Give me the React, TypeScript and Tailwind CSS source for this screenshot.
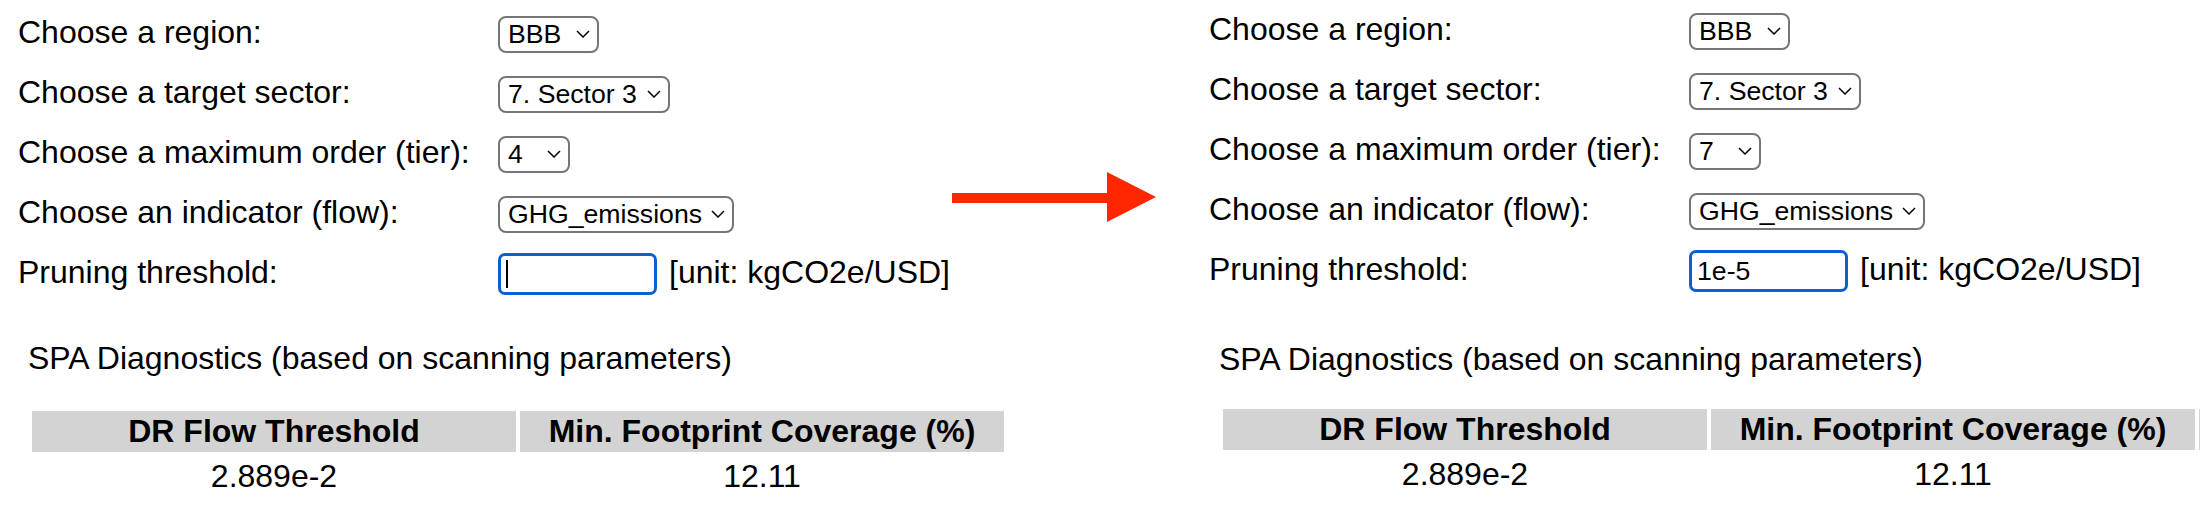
import React from 'react';

interface DropdownProps {
  value: string;
  width: string;
}

// looks like the browser's closed <select>
const Dropdown: React.FC<DropdownProps> = ({ value, width }) => (
  <div
    role="combobox"
    aria-expanded="false"
    className={`flex h-[37px] items-center justify-between rounded-[8px] border-2 border-[#767676] bg-white pl-[8px] pr-[7px] text-[26.67px] ${width}`}
  >
    <span className="whitespace-nowrap">{value}</span>
    <svg className="h-[8px] w-[14px] shrink-0" viewBox="0 0 14 8" fill="none" stroke="#000" strokeWidth="1.5">
      <path d="M1 1 L7 7 L13 1" />
    </svg>
  </div>
);

interface ThresholdProps {
  value: string;
}

const ThresholdInput: React.FC<ThresholdProps> = ({ value }) => (
  <div className="relative h-[42px] w-[159px]">
    <input
      type="text"
      defaultValue={value}
      className="h-full w-full rounded-[7px] border-[3px] border-[#0a60d2] bg-white px-[5px] text-[26.67px] text-black outline-none"
    />
    {/* text caret of the focused, still empty field */}
    {value === '' && <span className="absolute left-[8px] top-[7px] h-[28px] w-[2px] bg-black" />}
  </div>
);

const Row: React.FC<{ label: string; children: React.ReactNode }> = ({ label, children }) => (
  <div className="flex h-[60px] items-center">
    <div className="w-[480px] shrink-0 pb-[3px]">{label}</div>
    {children}
  </div>
);

interface PanelProps {
  tier: string;
  threshold: string;
  formTop: string;
  diagTop: string;
  tableTop: string;
  extraColumn?: boolean;
}

const Panel: React.FC<PanelProps> = ({ tier, threshold, formTop, diagTop, tableTop, extraColumn }) => (
  <div className="text-[32px] leading-[normal] text-black">
    <div className={`pl-[18px] ${formTop}`}>
      <Row label="Choose a region:">
        <Dropdown value="BBB" width="w-[101px]" />
      </Row>
      <Row label="Choose a target sector:">
        <Dropdown value="7. Sector 3" width="w-[172px]" />
      </Row>
      <Row label="Choose a maximum order (tier):">
        <Dropdown value={tier} width="w-[72px]" />
      </Row>
      <Row label="Choose an indicator (flow):">
        <Dropdown value="GHG_emissions" width="w-[236px]" />
      </Row>
      <Row label="Pruning threshold:">
        <div className="flex items-center gap-[12px]">
          <ThresholdInput value={threshold} />
          <span className="whitespace-nowrap pb-[3px]">[unit: kgCO2e/USD]</span>
        </div>
      </Row>
    </div>

    <div className={`pl-[28px] ${diagTop}`}>
      <p className="whitespace-nowrap">SPA Diagnostics (based on scanning parameters)</p>
      <table
        className={`table-fixed border-separate border-spacing-[4px] ${
          extraColumn ? 'w-[1284px]' : 'w-[980px]'
        } ${tableTop}`}
      >
        <thead>
          <tr>
            <th className="w-[484px] whitespace-nowrap bg-[#d3d3d3] p-[2px] text-center font-bold">DR Flow Threshold</th>
            <th className="w-[484px] whitespace-nowrap bg-[#d3d3d3] p-[2px] text-center font-bold">
              Min. Footprint Coverage (%)
            </th>
            {extraColumn && <th className="w-[300px] bg-[#d3d3d3] p-[2px]" />}
          </tr>
        </thead>
        <tbody>
          <tr>
            <td className="p-[2px] text-center">2.889e-2</td>
            <td className="p-[2px] text-center">12.11</td>
            {extraColumn && <td className="p-[2px]" />}
          </tr>
        </tbody>
      </table>
    </div>
  </div>
);

export default function App() {
  return (
    <div className="flex h-[512px] w-[2200px] overflow-hidden bg-white font-['Liberation_Sans',Arial,sans-serif]">
      <div className="w-[952px] shrink-0">
        <Panel tier="4" threshold="" formTop="pt-[4px]" diagTop="mt-[36px]" tableTop="mt-[30px]" />
      </div>

      <div className="w-[239px] shrink-0 pt-[172px]">
        <svg width="204" height="50" viewBox="0 0 204 50">
          <rect x="0" y="21" width="156" height="10" fill="#ff2600" />
          <polygon points="155,0 204,25 155,50" fill="#ff2600" />
        </svg>
      </div>

      <div className="min-w-0 flex-1 overflow-hidden">
        <Panel
          tier="7"
          threshold="1e-5"
          formTop="pt-[1px]"
          diagTop="mt-[40px]"
          tableTop="mt-[27px]"
          extraColumn
        />
      </div>
    </div>
  );
}
